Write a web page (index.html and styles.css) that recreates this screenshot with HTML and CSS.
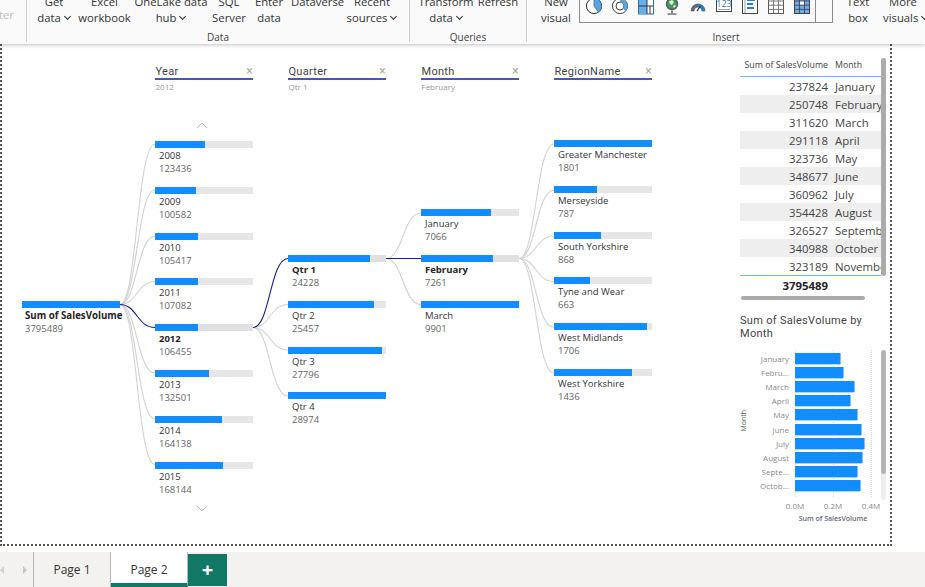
FILE: index.html
```html
<!DOCTYPE html>
<html lang="en">
<head>
    <meta charset="UTF-8">
    <title>Power BI Desktop - Page 2</title>
    <link rel="stylesheet" href="styles.css">
</head>
<body>
    <header class="ribbon">
        <div class="ribbon-stub"><span class="ribbon-faded">ter</span></div>

        <section class="ribbon-group group-data">
            <div class="ribbon-items">
                <div class="ribbon-btn">Get<br>data <i class="caret"></i></div>
                <div class="ribbon-btn">Excel<br>workbook</div>
                <div class="ribbon-btn">OneLake data<br>hub <i class="caret"></i></div>
                <div class="ribbon-btn">SQL<br>Server</div>
                <div class="ribbon-btn">Enter<br>data</div>
                <div class="ribbon-btn">Dataverse<br>&nbsp;</div>
                <div class="ribbon-btn">Recent<br>sources <i class="caret"></i></div>
            </div>
            <div class="ribbon-label">Data</div>
        </section>

        <section class="ribbon-group group-queries">
            <div class="ribbon-items">
                <div class="ribbon-btn">Transform<br>data <i class="caret"></i></div>
                <div class="ribbon-btn">Refresh<br>&nbsp;</div>
            </div>
            <div class="ribbon-label">Queries</div>
        </section>

        <section class="ribbon-group group-insert">
            <div class="ribbon-items">
                <div class="ribbon-btn">New<br>visual</div>
                <div class="gallery">
                    <div class="gallery-icons">
                        <svg class="gicon" viewBox="0 0 16 18"><circle cx="8" cy="9" r="7.6" fill="#fff" stroke="#333" stroke-width="1"/><path d="M8 9V1.4A7.6 7.6 0 0 1 12.5 15.1Z" fill="#5ba3dd" stroke="#2b6ea8" stroke-width=".8"/></svg>
                        <svg class="gicon" viewBox="0 0 16 18"><circle cx="8" cy="9" r="7.6" fill="#fff" stroke="#444" stroke-width="1"/><circle cx="8" cy="9" r="4" fill="#fff" stroke="#444" stroke-width="1"/><path d="M8 1.4A7.6 7.6 0 0 1 13.5 14.200L10.800 11.600A4 4 0 0 0 8 5Z" fill="#5ba3dd"/></svg>
                        <svg class="gicon" viewBox="0 0 16 18"><rect x=".5" y="0" width="15" height="17" fill="#fff" stroke="#2b6ea8"/><rect x="1" y="0" width="8" height="9" fill="#6aaee6"/><rect x="1" y="9" width="8" height="8" fill="#6aaee6"/><path d="M1 9H9M9 0V17M9 9H15M12 9V17" stroke="#335" stroke-width="1" fill="none"/></svg>
                        <svg class="gicon" viewBox="0 0 16 18"><circle cx="8" cy="7" r="5.6" fill="#3f9a5a" stroke="#555" stroke-width="1.2"/><path d="M5 4.5 8 3l2 2-2 3-2-1ZM9 9l2-1 1 1-2 2Z" fill="#e4efe6"/><path d="M8 13.5V16M3.5 17H12.5" stroke="#333" stroke-width="1.2" fill="none"/></svg>
                        <svg class="gicon" viewBox="0 0 16 18"><path d="M1 14A7 7 0 0 1 15 14H12A4 4 0 0 0 4 14Z" fill="#5a6d80" stroke="#3c4650" stroke-width=".6"/><path d="M8 7A7 7 0 0 1 15 14H12A4 4 0 0 0 8 10Z" fill="#1f7fd0"/><path d="M7 14 10.5 9" stroke="#333" stroke-width="1.3"/></svg>
                        <svg class="gicon" viewBox="0 0 16 18"><rect x=".5" y="0" width="15" height="14.5" fill="#fff" stroke="#444"/><text class="card-digits" x="8" y="10" text-anchor="middle">123</text><path d="M2.5 12.5H13.5" stroke="#888" stroke-width=".8"/></svg>
                        <svg class="gicon" viewBox="0 0 16 18"><rect x=".5" y="-1" width="15" height="17.5" fill="#fff" stroke="#444"/><path d="M3 0V16" stroke="#888" stroke-width=".8"/><path d="M5 3H13M5 7H11M5 11H12" stroke="#1f7fd0" stroke-width="2"/></svg>
                        <svg class="gicon" viewBox="0 0 16 18"><rect x=".5" y="-1" width="15" height="17.5" fill="#fff" stroke="#555"/><path d="M.5 4H15.5M.5 8.2H15.5M.5 12.4H15.5M5.5 0V16M10.5 0V16" stroke="#777" stroke-width="1" fill="none"/></svg>
                        <svg class="gicon" viewBox="0 0 16 18"><rect x=".5" y="-1" width="15" height="17.5" fill="#6aaee6" stroke="#444"/><rect x="6" y="4" width="4" height="4" fill="#fff"/><path d="M.5 4H15.5M.5 8.2H15.5M.5 12.4H15.5M5.5 0V16M10.5 0V16" stroke="#445" stroke-width=".9" fill="none"/></svg>
                    </div>
                    <div class="gallery-side"></div>
                </div>
                <div class="ribbon-btn">Text<br>box</div>
                <div class="ribbon-btn">More<br>visuals <i class="caret"></i></div>
            </div>
            <div class="ribbon-label">Insert</div>
        </section>
    </header>

    <main class="canvas">
        <div class="report-page">
            <!-- decomposition tree -->
            <section class="tree">
                <svg class="tree-lines" viewBox="0 44 738 500">
                    <g class="line-idle">
                        <path d="M120 304.500C137 304.500 137 144 155 144"/>
                        <path d="M120 304.500C137 304.500 137 190 155 190"/>
                        <path d="M120 304.500C137 304.500 137 236 155 236"/>
                        <path d="M120 304.500C137 304.500 137 281.500 155 281.500"/>
                        <path d="M120 304.500C137 304.500 137 373 155 373"/>
                        <path d="M120 304.500C137 304.500 137 419 155 419"/>
                        <path d="M120 304.500C137 304.500 137 464.500 155 464.500"/>
                        <path d="M253 327.500C270 327.500 270 304.500 288 304.500"/>
                        <path d="M253 327.500C270 327.500 270 350 288 350"/>
                        <path d="M253 327.500C270 327.500 270 396 288 396"/>
                        <path d="M386 258.500C403 258.500 403 213 421 213"/>
                        <path d="M386 258.500C403 258.500 403 304.500 421 304.500"/>
                        <path d="M519 258.500C536 258.500 536 144 554 144"/>
                        <path d="M519 258.500C536 258.500 536 190 554 190"/>
                        <path d="M519 258.500C536 258.500 536 236 554 236"/>
                        <path d="M519 258.500C536 258.500 536 281.500 554 281.500"/>
                        <path d="M519 258.500C536 258.500 536 327.500 554 327.500"/>
                        <path d="M519 258.500C536 258.500 536 373 554 373"/>
                    </g>
                    <g class="line-active">
                        <path d="M120 304.500C137 304.500 137 327.500 155 327.500"/>
                        <path d="M253 327.500C270 327.500 270 258.500 288 258.500"/>
                        <path d="M386 258.500H421"/>
                    </g>
                </svg>

                <div class="level level-root">
                    <div class="node is-root">
                        <div class="node-bar"><div class="node-fill" style="width:100%"></div></div>
                        <div class="node-name">Sum of SalesVolume</div>
                        <div class="node-value">3795489</div>
                    </div>
                </div>

                <div class="level level-year">
                    <div class="level-head">
                        <div class="level-title"><span>Year</span><span class="level-x">×</span></div>
                        <div class="level-sub">2012</div>
                    </div>
                    <svg class="chev chev-up" viewBox="0 0 12 7"><path d="M1 6 6 1l5 5"/></svg>
                    <div class="node">
                        <div class="node-bar"><div class="node-fill" style="width:51%"></div></div>
                        <div class="node-name">2008</div>
                        <div class="node-value">123436</div>
                    </div>
                    <div class="node">
                        <div class="node-bar"><div class="node-fill" style="width:41.500%"></div></div>
                        <div class="node-name">2009</div>
                        <div class="node-value">100582</div>
                    </div>
                    <div class="node">
                        <div class="node-bar"><div class="node-fill" style="width:43.500%"></div></div>
                        <div class="node-name">2010</div>
                        <div class="node-value">105417</div>
                    </div>
                    <div class="node">
                        <div class="node-bar"><div class="node-fill" style="width:44%"></div></div>
                        <div class="node-name">2011</div>
                        <div class="node-value">107082</div>
                    </div>
                    <div class="node is-selected">
                        <div class="node-bar"><div class="node-fill" style="width:44%"></div></div>
                        <div class="node-name">2012</div>
                        <div class="node-value">106455</div>
                    </div>
                    <div class="node">
                        <div class="node-bar"><div class="node-fill" style="width:55%"></div></div>
                        <div class="node-name">2013</div>
                        <div class="node-value">132501</div>
                    </div>
                    <div class="node">
                        <div class="node-bar"><div class="node-fill" style="width:68%"></div></div>
                        <div class="node-name">2014</div>
                        <div class="node-value">164138</div>
                    </div>
                    <div class="node">
                        <div class="node-bar"><div class="node-fill" style="width:69.500%"></div></div>
                        <div class="node-name">2015</div>
                        <div class="node-value">168144</div>
                    </div>
                    <svg class="chev chev-down" viewBox="0 0 12 7"><path d="M1 1l5 5 5-5"/></svg>
                </div>

                <div class="level level-quarter">
                    <div class="level-head">
                        <div class="level-title"><span>Quarter</span><span class="level-x">×</span></div>
                        <div class="level-sub">Qtr 1</div>
                    </div>
                    <div class="node is-selected">
                        <div class="node-bar"><div class="node-fill" style="width:84%"></div></div>
                        <div class="node-name">Qtr 1</div>
                        <div class="node-value">24228</div>
                    </div>
                    <div class="node">
                        <div class="node-bar"><div class="node-fill" style="width:88%"></div></div>
                        <div class="node-name">Qtr 2</div>
                        <div class="node-value">25457</div>
                    </div>
                    <div class="node">
                        <div class="node-bar"><div class="node-fill" style="width:96%"></div></div>
                        <div class="node-name">Qtr 3</div>
                        <div class="node-value">27796</div>
                    </div>
                    <div class="node">
                        <div class="node-bar"><div class="node-fill" style="width:100%"></div></div>
                        <div class="node-name">Qtr 4</div>
                        <div class="node-value">28974</div>
                    </div>
                </div>

                <div class="level level-month">
                    <div class="level-head">
                        <div class="level-title"><span>Month</span><span class="level-x">×</span></div>
                        <div class="level-sub">February</div>
                    </div>
                    <div class="node">
                        <div class="node-bar"><div class="node-fill" style="width:71.500%"></div></div>
                        <div class="node-name">January</div>
                        <div class="node-value">7066</div>
                    </div>
                    <div class="node is-selected">
                        <div class="node-bar"><div class="node-fill" style="width:73.500%"></div></div>
                        <div class="node-name">February</div>
                        <div class="node-value">7261</div>
                    </div>
                    <div class="node">
                        <div class="node-bar"><div class="node-fill" style="width:100%"></div></div>
                        <div class="node-name">March</div>
                        <div class="node-value">9901</div>
                    </div>
                </div>

                <div class="level level-region">
                    <div class="level-head">
                        <div class="level-title"><span>RegionName</span><span class="level-x">×</span></div>
                        <div class="level-sub">&nbsp;</div>
                    </div>
                    <div class="node">
                        <div class="node-bar"><div class="node-fill" style="width:100%"></div></div>
                        <div class="node-name">Greater Manchester</div>
                        <div class="node-value">1801</div>
                    </div>
                    <div class="node">
                        <div class="node-bar"><div class="node-fill" style="width:44%"></div></div>
                        <div class="node-name">Merseyside</div>
                        <div class="node-value">787</div>
                    </div>
                    <div class="node">
                        <div class="node-bar"><div class="node-fill" style="width:48%"></div></div>
                        <div class="node-name">South Yorkshire</div>
                        <div class="node-value">868</div>
                    </div>
                    <div class="node">
                        <div class="node-bar"><div class="node-fill" style="width:37%"></div></div>
                        <div class="node-name">Tyne and Wear</div>
                        <div class="node-value">663</div>
                    </div>
                    <div class="node">
                        <div class="node-bar"><div class="node-fill" style="width:95%"></div></div>
                        <div class="node-name">West Midlands</div>
                        <div class="node-value">1706</div>
                    </div>
                    <div class="node">
                        <div class="node-bar"><div class="node-fill" style="width:80%"></div></div>
                        <div class="node-name">West Yorkshire</div>
                        <div class="node-value">1436</div>
                    </div>
                </div>
            </section>

            <aside class="side">
                <div class="table-visual">
                    <table class="sales-table">
                        <thead>
                            <tr><th class="col-num">Sum of SalesVolume</th><th class="col-text">Month</th></tr>
                        </thead>
                        <tbody>
                            <tr><td class="col-num">237824</td><td class="col-text">January</td></tr>
                            <tr><td class="col-num">250748</td><td class="col-text">February</td></tr>
                            <tr><td class="col-num">311620</td><td class="col-text">March</td></tr>
                            <tr><td class="col-num">291118</td><td class="col-text">April</td></tr>
                            <tr><td class="col-num">323736</td><td class="col-text">May</td></tr>
                            <tr><td class="col-num">348677</td><td class="col-text">June</td></tr>
                            <tr><td class="col-num">360962</td><td class="col-text">July</td></tr>
                            <tr><td class="col-num">354428</td><td class="col-text">August</td></tr>
                            <tr><td class="col-num">326527</td><td class="col-text">September</td></tr>
                            <tr><td class="col-num">340988</td><td class="col-text">October</td></tr>
                            <tr><td class="col-num">323189</td><td class="col-text">November</td></tr>
                        </tbody>
                        <tfoot>
                            <tr><td class="col-num">3795489</td><td class="col-text"></td></tr>
                        </tfoot>
                    </table>
                    <div class="scroll-v"></div>
                    <div class="scroll-h"></div>
                </div>

                <div class="chart-visual">
                    <h3 class="chart-title">Sum of SalesVolume by Month</h3>
                    <div class="chart-body">
                        <div class="axis-name">Month</div>
                        <div class="chart-rows">
                            <div class="gridline grid-0"></div>
                            <div class="gridline grid-1"></div>
                            <div class="gridline grid-2"></div>
                            <div class="chart-row"><span class="chart-label">January</span><span class="chart-bar" style="width:45px"></span></div>
                            <div class="chart-row"><span class="chart-label">Febru...</span><span class="chart-bar" style="width:47.600px"></span></div>
                            <div class="chart-row"><span class="chart-label">March</span><span class="chart-bar" style="width:59.200px"></span></div>
                            <div class="chart-row"><span class="chart-label">April</span><span class="chart-bar" style="width:55.300px"></span></div>
                            <div class="chart-row"><span class="chart-label">May</span><span class="chart-bar" style="width:61.500px"></span></div>
                            <div class="chart-row"><span class="chart-label">June</span><span class="chart-bar" style="width:66.200px"></span></div>
                            <div class="chart-row"><span class="chart-label">July</span><span class="chart-bar" style="width:68.600px"></span></div>
                            <div class="chart-row"><span class="chart-label">August</span><span class="chart-bar" style="width:67.300px"></span></div>
                            <div class="chart-row"><span class="chart-label">Septe...</span><span class="chart-bar" style="width:62px"></span></div>
                            <div class="chart-row"><span class="chart-label">Octob...</span><span class="chart-bar" style="width:64.800px"></span></div>
                        </div>
                        <div class="chart-scroll"><div class="chart-thumb"></div></div>
                    </div>
                    <div class="chart-ticks"><span>0.0M</span><span>0.2M</span><span>0.4M</span></div>
                    <div class="chart-axis-title">Sum of SalesVolume</div>
                </div>
            </aside>
        </div>
    </main>

    <footer class="tabbar">
        <div class="tab-arrows">
            <i class="arrow-left"></i>
            <i class="arrow-right"></i>
        </div>
        <div class="tab">Page 1</div>
        <div class="tab tab-active">Page 2</div>
        <div class="tab-add">+</div>
    </footer>
</body>
</html>
```

FILE: styles.css
```css
* {
    box-sizing: border-box;
}
html, body {
    height: 100%;
}
body {
    margin: 0;
    display: flex;
    flex-direction: column;
    overflow: hidden;
    background-color: #fff;
    color: #333;
    font-family: "Open Sans", "Liberation Sans", sans-serif;
}

/* Ribbon */
.ribbon {
    flex: 0 0 44px;
    display: flex;
    overflow: hidden;
    background-color: #fafafa;
    box-shadow: 0 1px 4px rgba(0, 0, 0, 0.25);
    position: relative;
    z-index: 2;
    font-size: 11.3px;
    color: #333;
}
.ribbon-stub {
    width: 27px;
    padding-top: 7px;
    border-right: 1px solid #d0d0d0;
    margin-bottom: 2px;
    line-height: 16px;
}
.ribbon-faded {
    color: #bdbdbd;
    margin-left: -1px;
}
.ribbon-group {
    display: flex;
    flex-direction: column;
    height: 42px;
    border-right: 1px solid #d0d0d0;
}
.ribbon-items {
    height: 26px;
    display: grid;
    align-items: end;
    align-content: end;
}
.group-data {
    width: 383px;
}
.group-data .ribbon-items {
    padding-left: 3px;
    grid-template-columns: 48px 53px 80px 36px 44px 53px 56px;
}
.group-queries {
    width: 117px;
}
.group-queries .ribbon-items {
    padding-left: 7px;
    grid-template-columns: 58px 46px;
}
.group-insert {
    flex: 1;
    border-right: none;
}
.group-insert .ribbon-items {
    padding-left: 6px;
    grid-template-columns: 46px 254px 50px 40px;
}
.ribbon-btn {
    text-align: center;
    line-height: 16px;
    white-space: nowrap;
}
.ribbon-label {
    height: 18px;
    padding-top: 4px;
    text-align: center;
    font-size: 10px;
    line-height: 15px;
    color: #444;
}
.caret {
    display: inline-block;
    width: 5px;
    height: 5px;
    margin: 0 1px 3px 1px;
    border-right: 1px solid #333;
    border-bottom: 1px solid #333;
    transform: rotate(45deg);
}
.gallery {
    display: flex;
    height: 30px;
    margin-bottom: 3px;
    border: 1px solid #8a8a8a;
    border-top: none;
    align-items: flex-end;
}
.gallery-icons {
    flex: 1;
    display: flex;
    gap: 10px;
    padding: 0 0 7px 6px;
}
.gicon {
    width: 16px;
    height: 18px;
    flex: none;
}
.card-digits {
    font-family: "Open Sans", sans-serif;
    font-size: 9px;
    fill: #1f7fd0;
}
.gallery-side {
    width: 17px;
    height: 100%;
    border-left: 1px solid #8a8a8a;
}

/* Report canvas */
.canvas {
    flex: 1;
    min-height: 0;
    background-color: #fff;
}
.report-page {
    width: 892px;
    height: 502px;
    display: flex;
    border-left: 2px dotted #555;
    border-right: 2px dotted #555;
    border-bottom: 2px dotted #555;
}

/* Decomposition tree */
.tree {
    width: 738px;
    flex: none;
    position: relative;
    display: grid;
    grid-template-columns: repeat(5, 98px);
    column-gap: 35px;
    padding: 20px 0 0 20px;
    align-content: start;
}
.tree-lines {
    position: absolute;
    left: 0;
    top: 0;
    width: 738px;
    height: 500px;
    margin-left: -2px;
    fill: none;
}
.line-idle {
    stroke: #d2d2d2;
    stroke-width: 1.1;
}
.line-active {
    stroke: #1b1d9a;
    stroke-width: 1.1;
}
.level {
    position: relative;
    display: flex;
    flex-direction: column;
}
.level-root {
    padding-top: 237px;
}
.level-head {
    height: 28px;
}
.level-title {
    display: flex;
    justify-content: space-between;
    height: 16px;
    padding-left: 0.5px;
    border-bottom: 2px solid #4f55b5;
    font-family: Roboto, sans-serif;
    font-size: 11px;
    line-height: 15px;
    letter-spacing: 0.3px;
    color: #444;
}
.level-x {
    color: #aaa;
    font-size: 12px;
    line-height: 14px;
}
.level-sub {
    margin-top: 1px;
    padding-left: 0.5px;
    font-size: 8px;
    line-height: 12px;
    color: #999;
}
.level-year .level-head {
    margin-bottom: 49px;
}
.level-quarter .level-head {
    margin-bottom: 163px;
}
.level-month .level-head {
    margin-bottom: 117px;
}
.level-region .level-head {
    margin-bottom: 48px;
}
.chev {
    position: absolute;
    left: 41px;
    width: 12px;
    height: 7px;
    fill: none;
    stroke: #bbb;
    stroke-width: 1;
}
.chev-up {
    top: 58px;
}
.chev-down {
    top: 441px;
}
.node {
    height: 45.8px;
    flex: none;
}
.node-bar {
    height: 7px;
    background-color: #e6e6e6;
    margin-bottom: 1px;
}
.node-fill {
    height: 100%;
    background-color: #118dff;
}
.node-name,
.node-value {
    padding-left: 4px;
    font-size: 9.5px;
    line-height: 13px;
    white-space: nowrap;
}
.node-name {
    color: #333;
}
.node-value {
    color: #666;
}
.is-root .node-name,
.is-root .node-value {
    padding-left: 3px;
}
.is-selected .node-bar {
    background-color: #e0e0e0;
}
.is-selected .node-name,
.is-root .node-name {
    font-weight: 700;
    color: #252423;
}
.is-root .node-name {
    font-size: 9.7px;
}

/* Right hand visuals */
.side {
    width: 150px;
    flex: none;
    padding-top: 14px;
}
.table-visual {
    position: relative;
    width: 146px;
    height: 243px;
}
.sales-table {
    width: 141px;
    table-layout: fixed;
    border-collapse: collapse;
    font-size: 11.4px;
}
.sales-table th {
    height: 18px;
    padding-top: 0;
    padding-bottom: 4px;
    border-bottom: 1px solid #6ab7ff;
    font-size: 8.8px;
    font-weight: 400;
    color: #444;
    white-space: nowrap;
}
.sales-table td {
    height: 18px;
    padding: 2px 0 0;
    line-height: 16px;
    white-space: nowrap;
    overflow: hidden;
    color: #444;
}
.sales-table tbody tr:nth-child(even) {
    background-color: #eee;
}
.sales-table tfoot td {
    border-top: 1px solid #6ab7ff;
    font-weight: 700;
    color: #252423;
}
.col-num {
    width: 91px;
    padding-right: 3px !important;
    text-align: right;
}
.col-text {
    padding-left: 4px !important;
    text-align: left;
}
.scroll-v {
    position: absolute;
    left: 141px;
    top: 0;
    width: 5px;
    height: 218px;
    border-radius: 3px;
    background-color: #ababab;
}
.scroll-h {
    position: absolute;
    left: 1px;
    top: 238px;
    width: 124px;
    height: 4px;
    border-radius: 3px;
    background-color: #ababab;
}
.chart-visual {
    margin-top: 13px;
    width: 150px;
}
.chart-title {
    margin: 0;
    font-family: Roboto, sans-serif;
    font-size: 11px;
    font-weight: 400;
    line-height: 13px;
    letter-spacing: 0.3px;
    color: #444;
    width: 130px;
}
.chart-body {
    position: relative;
    display: flex;
    margin-top: 10px;
    height: 147px;
}
.axis-name {
    width: 7px;
    margin-bottom: 5px;
    align-self: center;
    writing-mode: vertical-rl;
    transform: rotate(180deg);
    font-size: 7px;
    line-height: 7px;
    color: #555;
}
.chart-rows {
    position: relative;
    padding-top: 1px;
}
.gridline {
    position: absolute;
    top: 0;
    height: 147px;
    border-left: 1px dotted #d8d8d8;
}
.grid-0 {
    left: 48px;
}
.grid-1 {
    left: 86px;
}
.grid-2 {
    left: 124px;
}
.chart-row {
    position: relative;
    display: flex;
    align-items: center;
    height: 14.2px;
}
.chart-label {
    width: 42px;
    flex: none;
    margin-right: 6px;
    text-align: right;
    font-size: 8px;
    color: #8a8a8a;
    white-space: nowrap;
}
.chart-bar {
    height: 11px;
    background-color: #118dff;
    box-shadow: 1px 0 0 #7cc0ff, 0 1px 0 #a8d5ff;
}
.chart-scroll {
    position: absolute;
    left: 141px;
    top: 0;
    width: 5px;
    height: 150px;
    border-radius: 3px;
    background-color: #eee;
}
.chart-thumb {
    height: 124px;
    border-radius: 3px;
    background-color: #b5b5b5;
}
.chart-ticks {
    display: flex;
    margin: 3px 0 0 36px;
    font-size: 8px;
    line-height: 12px;
    color: #8a8a8a;
}
.chart-ticks span {
    width: 38px;
    flex: none;
    text-align: center;
}
.chart-axis-title {
    width: 114px;
    margin: 2px 0 0 36px;
    text-align: center;
    font-size: 7px;
    line-height: 10px;
    color: #64648c;
    font-weight: 600;
}

/* Page tabs */
.tabbar {
    flex: 0 0 35px;
    display: flex;
    background-color: #f3f2f1;
    font-size: 12px;
    color: #333;
}
.tab-arrows {
    width: 34px;
    display: flex;
    align-items: center;
    justify-content: space-between;
    padding: 0 6px 0 0;
    border-right: 1px solid #b5b5b5;
}
.arrow-left,
.arrow-right {
    width: 0;
    height: 0;
    border-top: 4px solid transparent;
    border-bottom: 4px solid transparent;
}
.arrow-left {
    border-right: 4px solid #d0d0d0;
}
.arrow-right {
    border-left: 4px solid #c4c4c4;
}
.tab {
    width: 77px;
    display: flex;
    align-items: center;
    justify-content: center;
    border-right: 1px solid #b5b5b5;
}
.tab-active {
    background-color: #fff;
    border-bottom: 4px solid #117865;
    padding-top: 4px;
}
.tab-add {
    width: 39px;
    margin: 2px 0 1px;
    display: flex;
    align-items: center;
    justify-content: center;
    background-color: #117865;
    color: #fff;
    font-size: 20px;
    font-weight: 700;
    line-height: 1;
}
```
